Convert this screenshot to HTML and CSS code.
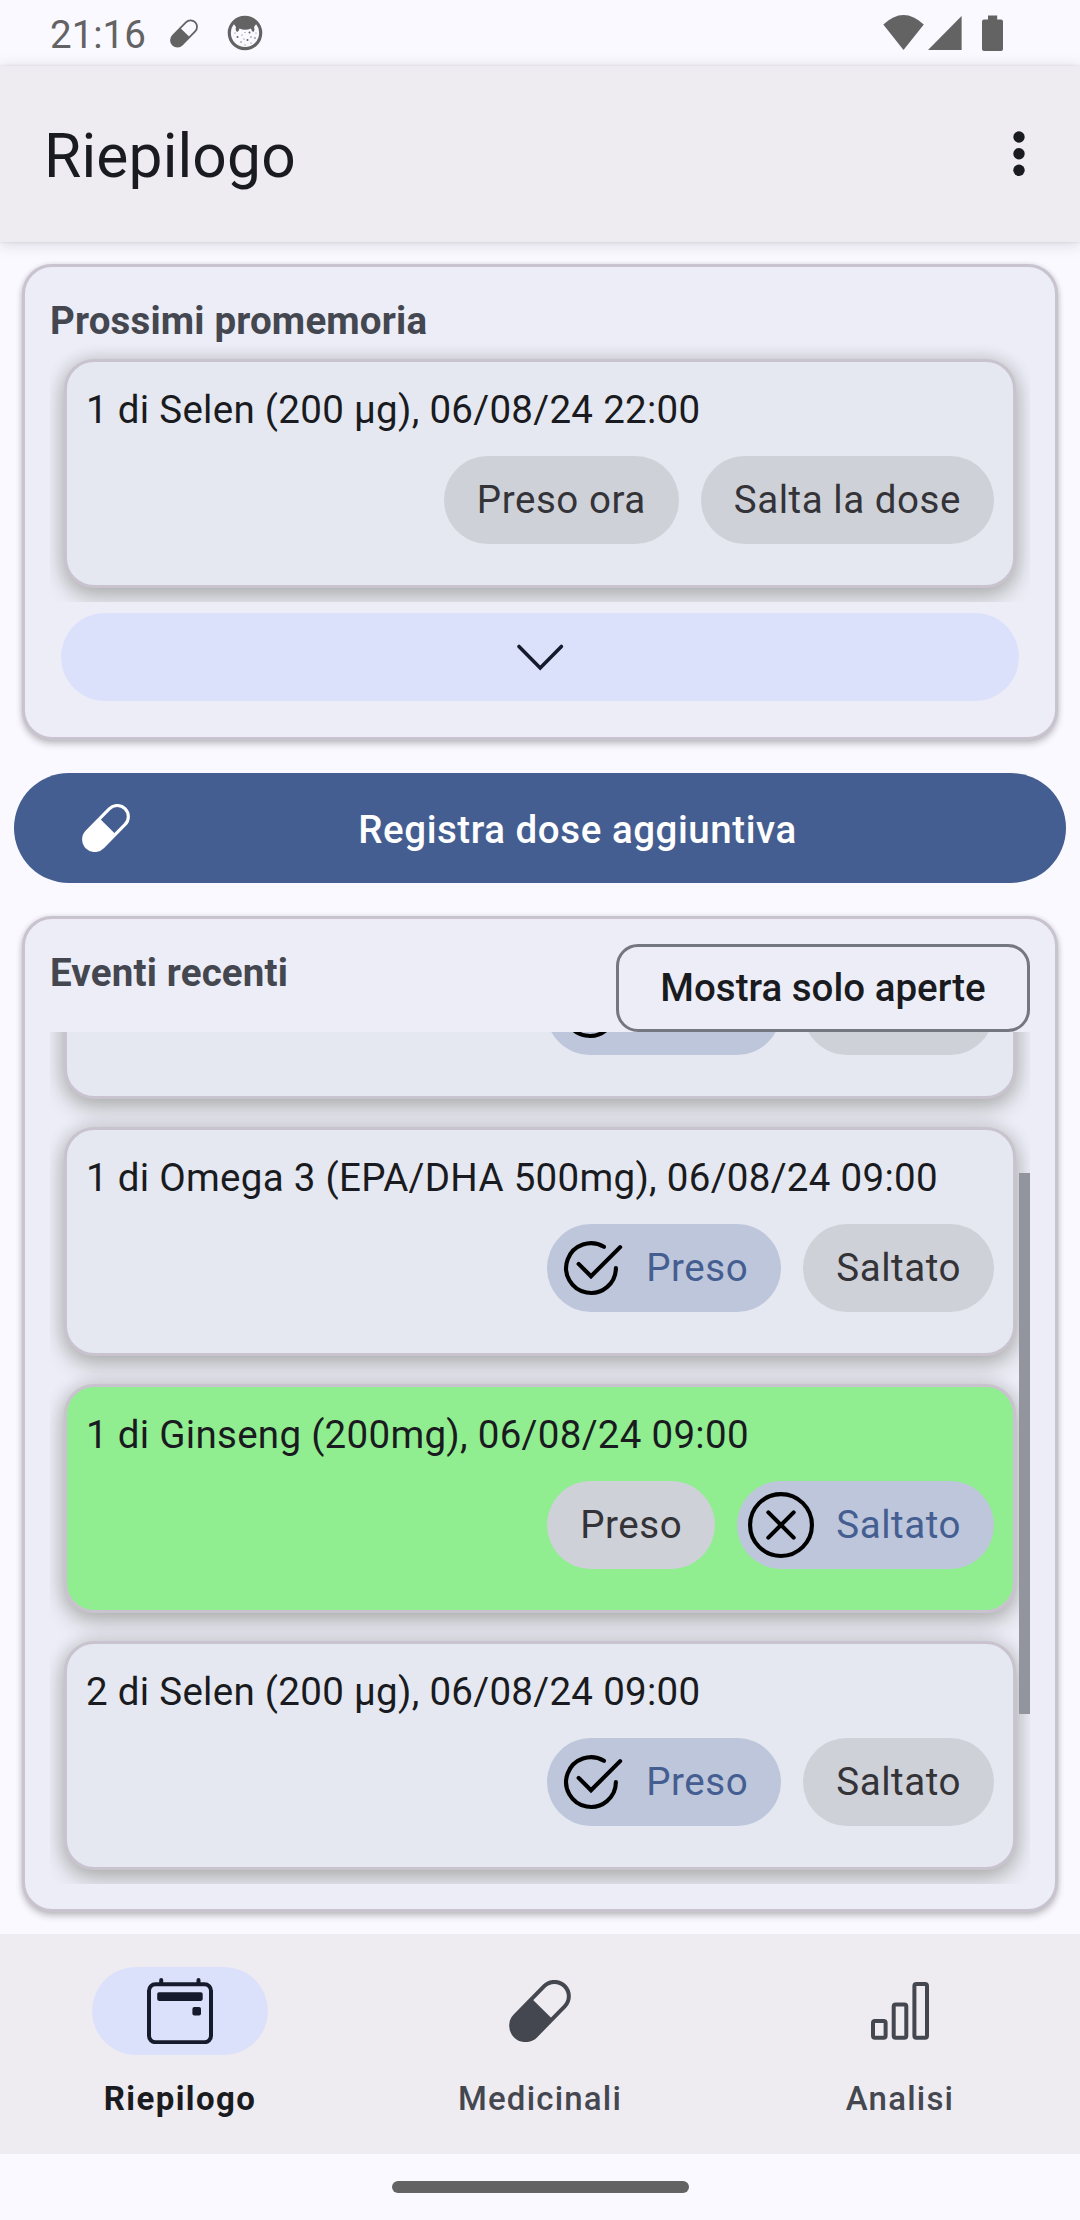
FILE: index.html
```html
<!DOCTYPE html>
<html lang="it">
<head>
<meta charset="utf-8">
<title>Riepilogo</title>
<link rel="stylesheet" href="styles.css">
</head>
<body>
<svg class="defs" width="0" height="0">
  <symbol id="pill" viewBox="0 0 62 62">
    <g transform="translate(31 31) rotate(-45.5)">
      <rect x="-35" y="-14.4" width="70" height="28.8" rx="14.4" fill="none" stroke="currentColor" stroke-width="4"/>
      <path d="M3-14.4H-20.6a14.4 14.4 0 0 0 0 28.8H3z" fill="currentColor"/>
    </g>
  </symbol>
  <symbol id="check" viewBox="0 0 24 24">
    <g fill="none" stroke="currentColor" stroke-width="1.5" stroke-linecap="round" stroke-linejoin="miter">
      <path d="M16.7 4.3A9.05 9.05 0 1 0 21.05 12"/>
      <path d="M7.5 10.5L12 15L22.6 4.4"/>
    </g>
  </symbol>
  <symbol id="cross" viewBox="0 0 24 24">
    <g fill="none" stroke="currentColor" stroke-width="1.5" stroke-linecap="round">
      <circle cx="12" cy="12" r="11.25"/>
      <path d="M7.4 7.4l9.2 9.2M16.6 7.4l-9.2 9.2"/>
    </g>
  </symbol>
</svg>
<div class="screen">
  <header class="status">
    <span class="time">21:16</span>
    <svg class="status-pill"><use href="#pill"/></svg>
    <svg class="status-face" viewBox="0 0 36 36">
      <circle cx="18" cy="18" r="15.7" fill="none" stroke="#636363" stroke-width="3.2"/>
      <path d="M6 8Q18-1 30 8L27 12Q28 15 26.500 17Q24.500 16.500 24 13.500Q18 16 12.500 13.500Q12 16.500 10 17Q8 15 9 12Z" fill="#636363"/>
      <g fill="#636363"><circle cx="10.500" cy="22" r="1"/><circle cx="22.500" cy="17.500" r="1"/><circle cx="20.500" cy="25" r="1"/><circle cx="28" cy="23" r=".8"/><circle cx="15" cy="20" r=".6"/><circle cx="14" cy="27" r=".7"/><circle cx="24" cy="28" r=".6"/><circle cx="17" cy="24" r=".6"/><circle cx="24" cy="22" r=".7"/><circle cx="8" cy="18" r=".6"/><circle cx="18" cy="30" r=".6"/><circle cx="18" cy="17.500" r=".5"/><circle cx="29" cy="18" r=".5"/></g>
    </svg>
    <svg class="status-right" viewBox="0 0 120 36" fill="#636363">
      <path d="M0.300 9.500Q20.500-9.500 40.800 9.500L20.500 35Z"/>
      <path d="M45 35L78.600 1V35Z"/>
      <path d="M105 0.500h9.200v4h3.800a2 2 0 0 1 2 2v27.500a2 2 0 0 1-2 2h-17a2 2 0 0 1-2-2v-27.500a2 2 0 0 1 2-2h4z"/>
    </svg>
  </header>

  <div class="appbar">
    <h1>Riepilogo</h1>
    <svg class="kebab" viewBox="0 0 12 46"><circle cx="6" cy="6" r="5.700"/><circle cx="6" cy="22.700" r="5.700"/><circle cx="6" cy="39.300" r="5.700"/></svg>
  </div>

  <main class="content">
    <section class="panel next">
      <h2>Prossimi promemoria</h2>
      <div class="clip clip-next">
        <article class="dose">
          <p>1 di Selen (200 µg), 06/08/24 22:00</p>
          <div class="chips"><button class="chip">Preso ora</button><button class="chip">Salta la dose</button></div>
        </article>
      </div>
      <button class="expand"><svg viewBox="0 0 48 28"><path d="M3 3.500L24.200 25L45.400 3.500" fill="none" stroke="#151a2c" stroke-width="3.600" stroke-linecap="round"/></svg></button>
    </section>

    <button class="primary"><svg><use href="#pill"/></svg><span>Registra dose aggiuntiva</span></button>

    <section class="panel recent">
      <div class="recent-head">
        <h2>Eventi recenti</h2>
        <button class="outlined">Mostra solo aperte</button>
      </div>
      <div class="clip list">
        <article class="dose">
          <p></p>
          <div class="chips"><button class="chip on taken"><svg><use href="#check"/></svg></button><button class="chip skipped"></button></div>
        </article>
        <article class="dose">
          <p>1 di Omega 3 (EPA/DHA 500mg), 06/08/24 09:00</p>
          <div class="chips"><button class="chip on"><svg><use href="#check"/></svg>Preso</button><button class="chip">Saltato</button></div>
        </article>
        <article class="dose green">
          <p>1 di Ginseng (200mg), 06/08/24 09:00</p>
          <div class="chips"><button class="chip">Preso</button><button class="chip on"><svg><use href="#cross"/></svg>Saltato</button></div>
        </article>
        <article class="dose">
          <p>2 di Selen (200 µg), 06/08/24 09:00</p>
          <div class="chips"><button class="chip on"><svg><use href="#check"/></svg>Preso</button><button class="chip">Saltato</button></div>
        </article>
        <div class="scrollbar"></div>
      </div>
    </section>
  </main>

  <nav class="tabs">
    <a class="tab active"><span class="ind"><svg viewBox="0 0 66 66">
      <rect x="2" y="6.200" width="62" height="58" rx="6.500" fill="none" stroke="currentColor" stroke-width="4"/>
      <path d="M14.200 2v4M51.500 2v4" stroke="currentColor" stroke-width="4" stroke-linecap="round"/>
      <rect x="10.200" y="14.300" width="45.500" height="8.600" rx="1.800" fill="currentColor"/>
      <rect x="45.400" y="29" width="8.600" height="8.600" rx="2" fill="currentColor"/>
    </svg></span><span class="label">Riepilogo</span></a>
    <a class="tab"><span class="ind"><svg class="tab-pill"><use href="#pill"/></svg></span><span class="label">Medicinali</span></a>
    <a class="tab"><span class="ind"><svg viewBox="0 0 66 66"><g fill="none" stroke="currentColor" stroke-width="4">
      <rect x="6" y="43" width="12.600" height="16.700" rx="2"/><rect x="26.700" y="26.600" width="12.600" height="33.100" rx="2"/><rect x="47.400" y="6" width="12.600" height="53.700" rx="2"/></g>
    </svg></span><span class="label">Analisi</span></a>
  </nav>
  <footer class="gesture"><div></div></footer>
</div>
</body>
</html>
```
FILE: styles.css
```css
* { box-sizing: border-box; margin: 0; padding: 0; }
body { background: #faf9ff; font-family: Roboto, "Liberation Sans", sans-serif; font-size: 38.5px; color: #1a1b20; }
button { font: inherit; border: 0; color: inherit; background: none; white-space: nowrap; }
svg { display: block; flex: none; }
.defs { position: absolute; }
.screen { width: 1080px; height: 2220px; display: flex; flex-direction: column; overflow: hidden; }

.status { height: 66px; flex: none; display: flex; align-items: flex-start; color: #636363; padding: 15px 77px 0 50px; }
.time { line-height: 40px; width: 120px; }
.status-pill { width: 28px; height: 29px; margin-top: 4px; }
.status-face { width: 36px; height: 36px; margin: 0 0 0 28.5px; }
.status-right { width: 120px; height: 36px; margin-left: auto; }

.appbar { position: relative; height: 176px; flex: none; background: #eeecf1; display: flex; align-items: center; justify-content: space-between; padding: 3px 55px 0 44px; box-shadow: 0 2px 14px rgba(40,40,60,.17), 0 0 3px rgba(0,0,0,.1); }
.appbar h1 { font-size: 60.5px; font-weight: 400; line-height: 72px; padding-top: 2px; letter-spacing: .15px; }
.kebab { width: 12px; height: 46px; margin-bottom: 3px; fill: #1a1b20; }

.content { flex: 1; display: flex; flex-direction: column; padding: 22px 22px 0; min-height: 0; }
.panel { border: 3px solid #c9c3cf; border-radius: 30px; background: #ecedf6; box-shadow: 0 4px 7px rgba(0,0,0,.22), 0 0 5px rgba(0,0,0,.1); flex: none; }
.panel h2 { font-size: 38.5px; line-height: 46px; font-weight: 700; color: #44474f; letter-spacing: .17px; }
.next { height: 476px; padding: 31px 25px 0; }
.clip { overflow: hidden; }
.clip-next { height: 258px; }
.dose { position: relative; height: 229px; margin: 0 14px 28px; flex: none; border: 3px solid #c9c3cf; border-radius: 30px; background: #e5e8f1; padding: 25px 19px 0; box-shadow: 0 9px 22px rgba(30,30,5,.24), 0 0 18px rgba(30,30,5,.15); }
.clip-next .dose { margin-top: 15px; }
.dose p { height: 46px; line-height: 46px; letter-spacing: .29px; white-space: nowrap; }
.green { background: #90ee90; }
.chips { display: flex; justify-content: flex-end; gap: 22px; margin-top: 23px; }
.chip { height: 88px; border-radius: 44px; padding: 0 33px 2px; background: #cfd1d9; color: #333338; letter-spacing: .55px; display: flex; align-items: center; }
.chip.on { background: #bdc6da; color: #455e91; padding-left: 11px; }
.chip svg { width: 66px; height: 66px; margin: 2px 22px 0 0; color: #000; }
.taken { width: 235px; }
.skipped { width: 191px; }
.expand { display: flex; width: 958px; height: 88px; margin: 11px 0 0 11px; border-radius: 44px; background: #dce1fb; align-items: center; justify-content: center; }
.expand svg { width: 48px; height: 28px; }

.primary { display: flex; align-items: center; width: 1052px; height: 110px; margin: 33px -8px; border-radius: 55px; background: #455e91; color: #fff; font-weight: 500; flex: none; padding: 0 41px 0 68px; letter-spacing: .55px; }
.primary svg { width: 48px; height: 48px; }
.primary span { flex: 1; padding-top: 2px; }

.recent { height: 996px; padding: 25px 25px 0; }
.recent-head { height: 88px; display: flex; justify-content: space-between; }
.recent-head h2 { padding-top: 6px; }
.outlined { width: 414px; height: 88px; border: 3px solid #757780; border-radius: 22px; font-weight: 500; padding-bottom: 2px; }
.list { position: relative; height: 852px; display: flex; flex-direction: column; }
.list .dose:first-child { margin-top: -162px; }
.scrollbar { position: absolute; right: 0; top: 141px; width: 11px; height: 541px; background: #92959d; }

.tabs { height: 220px; flex: none; background: #eeecf1; display: grid; grid-template-columns: repeat(3, 1fr); }
.tab { display: flex; flex-direction: column; align-items: center; padding-top: 33px; color: #44474f; }
.ind { width: 176px; height: 88px; border-radius: 44px; display: flex; align-items: center; justify-content: center; }
.ind svg { width: 66px; height: 66px; }
.ind .tab-pill { width: 62px; height: 62px; }
.label { margin-top: 24px; font-size: 33px; line-height: 40px; font-weight: 500; letter-spacing: 1.2px; }
.active .ind { background: #dce1fb; color: #151a2c; }
.active .label { font-weight: 700; color: #1a1b20; letter-spacing: 1.4px; }
.gesture { height: 66px; flex: none; display: flex; justify-content: center; padding-top: 27px; }
.gesture div { width: 297px; height: 12px; border-radius: 6px; background: #636363; }
```
